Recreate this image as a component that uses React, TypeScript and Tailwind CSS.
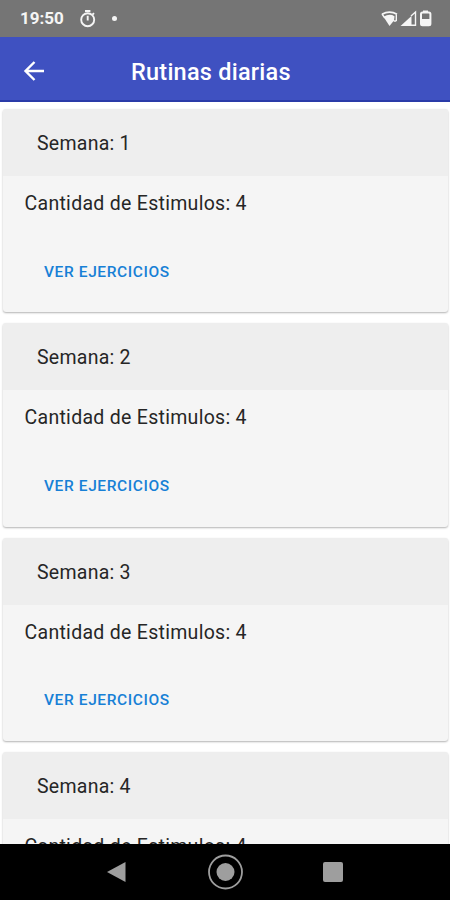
import React from 'react';

interface Week {
  id: number;
  stimuli: number;
}

const weeks: Week[] = [
  { id: 1, stimuli: 4 },
  { id: 2, stimuli: 4 },
  { id: 3, stimuli: 4 },
  { id: 4, stimuli: 4 },
];

const StatusBar: React.FC = () => (
  <div className="flex h-[37px] shrink-0 items-center justify-between bg-[#757575] pl-[20px] pr-[18px] text-[#f5f5f5]">
    <div className="flex items-center">
      <span className="w-[45px] whitespace-nowrap text-[17px] font-bold leading-none">19:50</span>
      {/* Timer */}
      <svg className="ml-[14px] h-[18px] w-[18px]" viewBox="0 0 18 18" fill="none" stroke="currentColor">
        <path d="M6 1h5.400" strokeWidth="2" />
        <circle cx="8.700" cy="9.700" r="6.500" strokeWidth="1.900" />
        <path d="M8.700 5.800v4.600M13.500 4.700l1.500-1.500" strokeWidth="1.900" />
      </svg>
      <span className="ml-[15px] h-[5px] w-[5px] rounded-full bg-current" />
    </div>
    <svg className="h-[18px] w-[51px]" viewBox="0 0 51 18" fill="none">
      {/* Wifi */}
      <path d="M1 4.200Q8.500 0 16 4.200" stroke="currentColor" strokeWidth="1.800" />
      <path d="M2.500 6.800Q8.500 3 13.500 6.200L13 10.500L8.500 16Z" fill="currentColor" />
      <path d="M1 4L3.800 8M15.300 4.500v6.500M12.700 11h2.600" stroke="currentColor" strokeWidth="1.400" />
      {/* Signal */}
      <path d="M19.500 16L30.500 6v10Z" fill="currentColor" />
      <path d="M30 6l4.500-4V15.300H30" stroke="currentColor" strokeWidth="1.400" />
      {/* Battery */}
      <path d="M42 .5h5v2h-5z" fill="currentColor" />
      <rect x="40" y="2.500" width="9.400" height="12.800" rx="1.500" stroke="currentColor" strokeWidth="2" />
      <path d="M40 9h9.500v6H40z" fill="currentColor" />
    </svg>
  </div>
);

const Header: React.FC = () => (
  <header className="flex h-[65px] shrink-0 items-center border-b-2 border-[#2a3ba8] bg-[#3f51c1] pl-[23px] pt-[4px] text-white">
    <button aria-label="Volver" className="h-[22px] w-[22px]">
      <svg className="h-[22px] w-[22px]" viewBox="0 0 22 22" fill="none" stroke="currentColor" strokeWidth="2.400">
        <path d="M21 11H3M11.500 2L2.500 11L11.500 20" />
      </svg>
    </button>
    <h1 className="ml-[86px] mt-[5px] whitespace-nowrap text-[23.500px] font-medium leading-none tracking-[0.230px]">
      Rutinas diarias
    </h1>
  </header>
);

const WeekCard: React.FC<{ week: Week }> = ({ week }) => (
  <article className="h-[203.400px] shrink-0 overflow-hidden rounded-[3px] bg-[#f5f5f5] shadow-[0_1px_2px_rgba(0,0,0,0.3)]">
    <div className="flex h-[67px] items-center bg-[#eeeeee] pl-[34px] pt-[3px]">
      <h2 className="whitespace-nowrap text-[19.500px] leading-6 tracking-[0.250px]">Semana: {week.id}</h2>
    </div>
    <p className="mt-[16px] whitespace-nowrap pl-[21.500px] text-[19.500px] leading-6 tracking-[0.290px]">
      Cantidad de Estimulos: {week.stimuli}
    </p>
    <button className="ml-[41px] mt-[45.500px] block whitespace-nowrap text-[15.500px] font-medium leading-5 tracking-[0.600px] text-[#1780d6]">
      VER EJERCICIOS
    </button>
  </article>
);

const NavBar: React.FC = () => (
  <nav className="flex h-[56px] shrink-0 items-center bg-black pl-[107px] text-[#9e9e9e]">
    <svg className="h-[20px] w-[19px]" viewBox="0 0 19 20" fill="currentColor">
      <path d="M0 10L18.500 0v20Z" />
    </svg>
    <svg className="ml-[82px] h-[36px] w-[36px]" viewBox="0 0 36 36">
      <circle cx="17.500" cy="18" r="16.500" fill="none" stroke="currentColor" strokeWidth="1.800" />
      <circle cx="17.500" cy="18" r="9" fill="currentColor" />
    </svg>
    <div className="ml-[79px] h-[20px] w-[20px] rounded-[2px] bg-current" />
  </nav>
);

const App: React.FC = () => {
  return (
    <div className="flex h-[900px] w-[450px] flex-col overflow-hidden bg-white font-['Roboto',sans-serif] text-[#262626]">
      <StatusBar />
      <Header />
      <main className="flex min-h-0 flex-1 flex-col gap-[11px] overflow-hidden pl-[3px] pr-[2px] pt-[7px]">
        {weeks.map((week) => (
          <WeekCard key={week.id} week={week} />
        ))}
      </main>
      <NavBar />
    </div>
  );
};

export default App;
